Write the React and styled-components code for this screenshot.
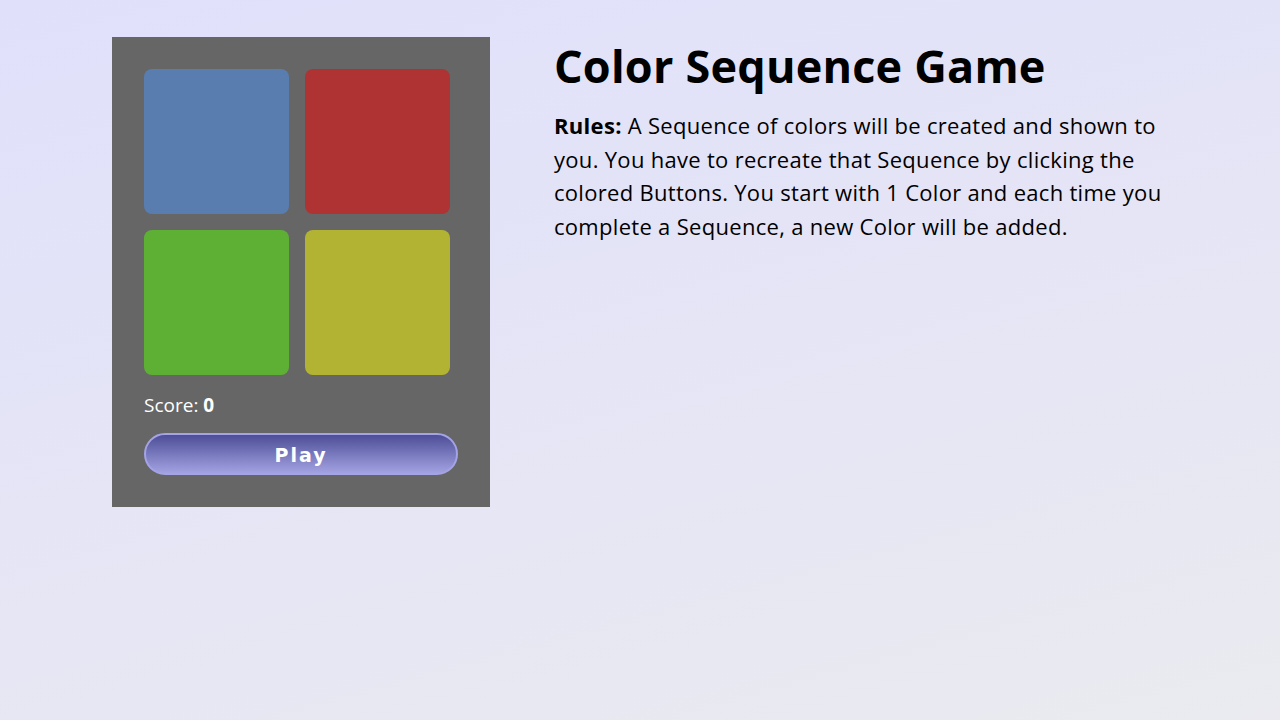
import styled, { createGlobalStyle } from "styled-components";

const GlobalStyle = createGlobalStyle`
  html, body {
    margin: 0;
    min-height: 100vh;
  }
  body {
    font-family: "Open Sans", "Noto Sans", sans-serif;
    background: linear-gradient(165deg, #e0e0fb 0%, #eaeaf0 100%);
    background-attachment: fixed;
  }
`;

const Page = styled.div`
  display: flex;
  align-items: flex-start;
  gap: 64px;
  max-width: 1056px;
  margin: 0 auto;
  padding-top: 37px;
`;

const Board = styled.div`
  flex: none;
  width: 314px;
  padding: 32px;
  background-color: #666;
  display: flex;
  flex-direction: column;
`;

const Pads = styled.div`
  display: grid;
  grid-template-columns: repeat(2, 145px);
  grid-auto-rows: 145px;
  gap: 16px;
`;

const Pad = styled.button`
  border: none;
  padding: 0;
  border-radius: 8px;
  background-color: ${({ color }) => color};
  cursor: pointer;
`;

const Score = styled.p`
  margin: 18px 0 16px;
  color: #fff;
  font-size: 19px;
  line-height: 24px;

  b {
    font-weight: 700;
  }
`;

const PlayButton = styled.button`
  height: 42px;
  border-radius: 21px;
  border: 2px solid #a3a3e6;
  background: linear-gradient(to bottom, #4e4e98 0%, #a2a2e2 100%);
  color: #fff;
  font-family: "DejaVu Sans", Verdana, sans-serif;
  font-weight: 700;
  font-size: 19px;
  letter-spacing: 2px;
  padding-top: 3px;
  cursor: pointer;
`;

const Info = styled.div`
  flex: 1;
  color: #000;
`;

const Title = styled.h1`
  margin: 0 0 14px;
  font-size: 45px;
  line-height: 58px;
  font-weight: 700;
  letter-spacing: 0.2px;
`;

const Rules = styled.p`
  margin: 0;
  font-size: 22px;
  line-height: 33.7px;
  letter-spacing: 0.3px;
`;

const pads = ["#5a7db0", "#b03333", "#5eb035", "#b3b333"];

export default function App() {
  return (
    <>
      <GlobalStyle />
      <Page>
        <Board>
          <Pads>
            {pads.map((c) => (
              <Pad key={c} color={c} />
            ))}
          </Pads>
          <Score>
            Score: <b>0</b>
          </Score>
          <PlayButton>Play</PlayButton>
        </Board>
        <Info>
          <Title>Color Sequence Game</Title>
          <Rules>
            <b>Rules:</b> A Sequence of colors will be created and shown to
            you. You have to recreate that Sequence by clicking the colored
            Buttons. You start with 1 Color and each time you complete a
            Sequence, a new Color will be added.
          </Rules>
        </Info>
      </Page>
    </>
  );
}
